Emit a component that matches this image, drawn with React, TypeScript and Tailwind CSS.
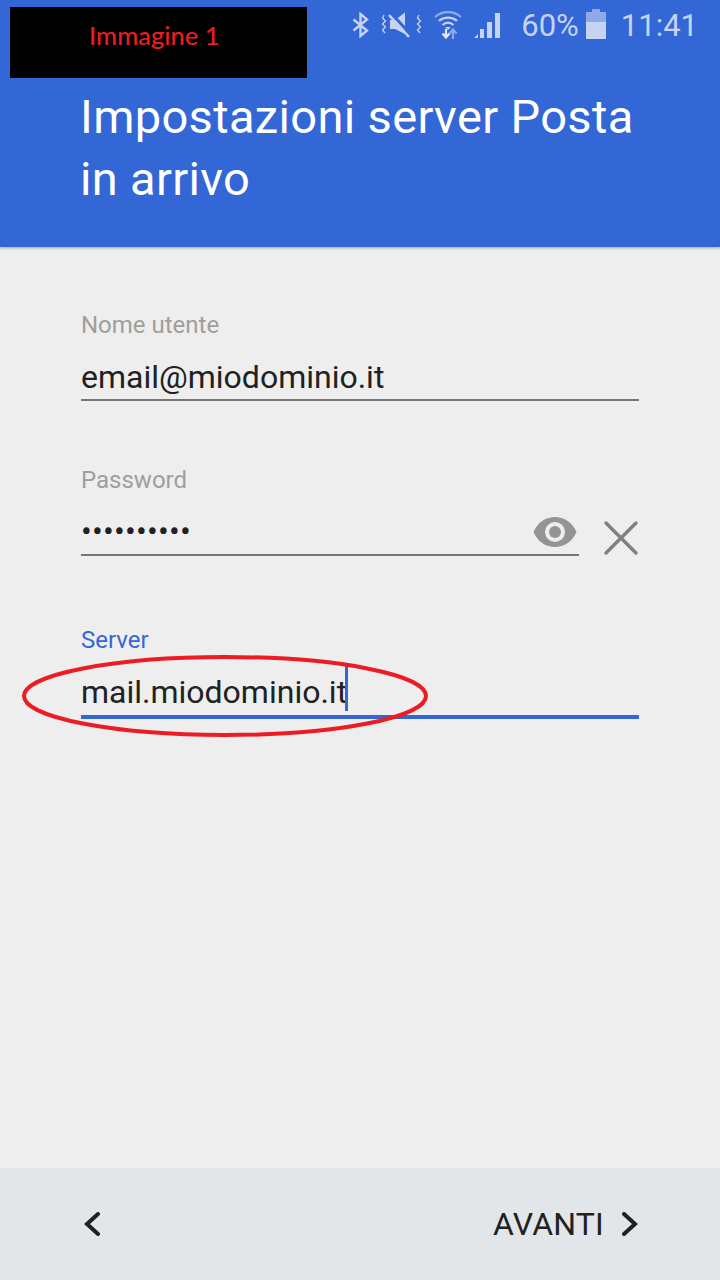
import React from 'react';

const StatusIcons = () => (
  <div className="flex items-start text-[#c6d3f2]">
    {/* bluetooth */}
    <svg width="18" height="26" viewBox="0 0 18 26" fill="none" stroke="#c6d3f2" strokeWidth="2.4" className="mr-[12px] mt-[12px]">
      <path d="M1.5 7.5 L15 18.5 L8.5 24 V2 L15 7.5 L1.5 18.5" />
    </svg>
    {/* mute + vibrate */}
    <svg width="40" height="28" viewBox="0 0 40 28" fill="none" className="mr-[12px] mt-[12px]">
      <path d="M2 3 L0.5 6 L3.5 9 L0.5 12 L3.5 15 L0.5 18 L3 21" stroke="#c6d3f2" strokeWidth="1.3" />
      <path d="M37 3 L35.5 6 L38.5 9 L35.5 12 L38.5 15 L35.5 18 L38 21" stroke="#c6d3f2" strokeWidth="1.3" />
      <path d="M8 8 H13 L23 0.5 V22 L13 17 H8 Z" fill="#c6d3f2" />
      <path d="M8 0 L31 25" stroke="#3367d6" strokeWidth="3" />
      <path d="M7 3 L27 25" stroke="#c6d3f2" strokeWidth="2.6" />
    </svg>
    {/* wifi with arrows */}
    <svg width="28" height="28" viewBox="0 0 28 28" fill="none" className="mr-[11px] mt-[11px]">
      <path d="M1 6 C8 -0.5 20 -0.5 27 6" stroke="#8fa9e6" strokeWidth="2.2" />
      <path d="M5 10 C10 5.5 18 5.5 23 10" stroke="#c6d3f2" strokeWidth="2.2" />
      <path d="M8.5 14 C12 11 16 11 19.5 14" stroke="#c6d3f2" strokeWidth="2.2" />
      <path d="M11 16 H17 L14 19 Z" fill="#c6d3f2" />
      <path d="M12 18 V26 M8.5 22.5 L12 26.5 L15.5 22.5" stroke="#e4eafa" strokeWidth="2.2" />
      <path d="M19 28 V19 M15.5 22.5 L19 18.5 L22.5 22.5" stroke="#8fa9e6" strokeWidth="2.2" />
    </svg>
    {/* signal */}
    <svg width="28" height="28" viewBox="0 0 28 28" className="mr-[20px] mt-[11px]">
      <path d="M1 27 L5 23 V27 Z" fill="#c6d3f2" />
      <rect x="7" y="18" width="4" height="9" fill="#c6d3f2" />
      <rect x="14" y="11" width="5" height="16" fill="#c6d3f2" />
      <rect x="22" y="2" width="5" height="25" fill="#c6d3f2" />
    </svg>
    <span className="text-[31px] leading-[34px] mt-[9px] mr-[7px]">60%</span>
    {/* battery */}
    <svg width="20" height="30" viewBox="0 0 20 30" className="mr-[15px] mt-[9px]">
      <rect x="6" y="0" width="8" height="3" fill="#8fa9e6" />
      <rect x="0" y="3" width="20" height="27" fill="#8fa9e6" />
      <rect x="0" y="13" width="20" height="17" fill="#c6d3f2" />
    </svg>
    <span className="text-[31px] leading-[34px] mt-[9px]">11:41</span>
  </div>
);

const Field = ({
  label,
  value,
  active,
  extra,
}: {
  label: string;
  value: React.ReactNode;
  active?: boolean;
  extra?: React.ReactNode;
}) => (
  <div className="flex items-end">
    <div className="flex-1">
      <div className={`text-[24px] leading-[28px] ${active ? 'text-[#3367d6]' : 'text-[#9e9e9e]'}`}>{label}</div>
      <div className={`mt-[12px] ${active ? 'h-[53px] border-b-4 border-[#3367d6]' : 'h-[50px] border-b-2 border-[#757575]'}`}>
        {value}
      </div>
    </div>
    {extra}
  </div>
);

export default function App() {
  return (
    <div className="relative flex flex-col w-[720px] h-[1280px] bg-[#eeeeee] overflow-hidden font-['Roboto',sans-serif]">
      <header className="h-[247px] bg-[#3367d6] shadow-[0_1px_3px_rgba(0,0,0,0.3)] flex flex-col">
        <div className="flex justify-end pr-[22px] h-[86px]">
          <StatusIcons />
        </div>
        <h1 className="pl-[80px] pr-[60px] text-[47px] tracking-[0.35px] leading-[62px] text-white font-normal">
          Impostazioni server Posta in arrivo
        </h1>
      </header>

      <main className="flex-1 flex flex-col gap-[65px] pl-[81px] pr-[81px] pt-[64px]">
        <Field
          label="Nome utente"
          value={<span className="text-[32px] leading-[52px] text-[#212121]">email@miodominio.it</span>}
        />
        <Field
          label="Password"
          value={<span className="text-[32px] leading-[50px] text-[#212121] tracking-[0.2px]">••••••••••</span>}
          extra={
            <div className="flex items-center w-[60px] h-[60px] -mb-[12px] justify-end">
              <svg width="36" height="36" viewBox="0 0 36 36" fill="none" stroke="#808080" strokeWidth="3.4" strokeLinecap="round">
                <path d="M3 3 L33 33 M33 3 L3 33" />
              </svg>
            </div>
          }
        />
        <div className="mt-[5px]">
          <Field
            active
            label="Server"
            value={
              <span className="relative inline-block text-[32px] leading-[52px] text-[#212121]">
                mail.miodominio.it
                <span className="absolute right-[-1px] top-[0px] w-[3px] h-[45px] bg-[#3367d6]" />
              </span>
            }
          />
        </div>
      </main>

      <footer className="h-[112px] bg-[#e2e6e9] flex items-center justify-between pl-[84px] pr-[82px] text-[#212121]">
        <svg width="16" height="24" viewBox="0 0 16 24" fill="none" stroke="#212121" strokeWidth="4" strokeLinecap="round">
          <path d="M14 2 L3 12 L14 22" />
        </svg>
        <div className="flex items-center">
          <span className="text-[32px] tracking-[0.2px] leading-none mr-[18px]">AVANTI</span>
          <svg width="16" height="24" viewBox="0 0 16 24" fill="none" stroke="#212121" strokeWidth="4" strokeLinecap="round">
            <path d="M2 2 L13 12 L2 22" />
          </svg>
        </div>
      </footer>

      {/* pasted-on annotations */}
      <div className="absolute left-[10px] top-[7px] w-[297px] h-[71px] bg-black pl-[79px] pt-[12px] text-[#ed1c24] text-[25.5px] leading-[32px] font-['Lato',sans-serif] font-medium">
        Immagine 1
      </div>
      <svg className="absolute left-[533px] top-[517px]" width="44" height="30" viewBox="0 0 44 30">
        <path fillRule="evenodd" fill="#949494" d="M0.5 15 C9 -5 35 -5 43.5 15 C35 35 9 35 0.5 15 Z M22 5 A10 10 0 1 0 22 25 A10 10 0 1 0 22 5 Z" />
        <circle cx="22" cy="15" r="6" fill="#949494" />
      </svg>
      <svg className="absolute left-[20px] top-[653px]" width="412" height="86" viewBox="0 0 412 86" fill="none">
        <ellipse cx="205" cy="43" rx="201" ry="39" stroke="#ed1c24" strokeWidth="4" />
      </svg>
    </div>
  );
}
